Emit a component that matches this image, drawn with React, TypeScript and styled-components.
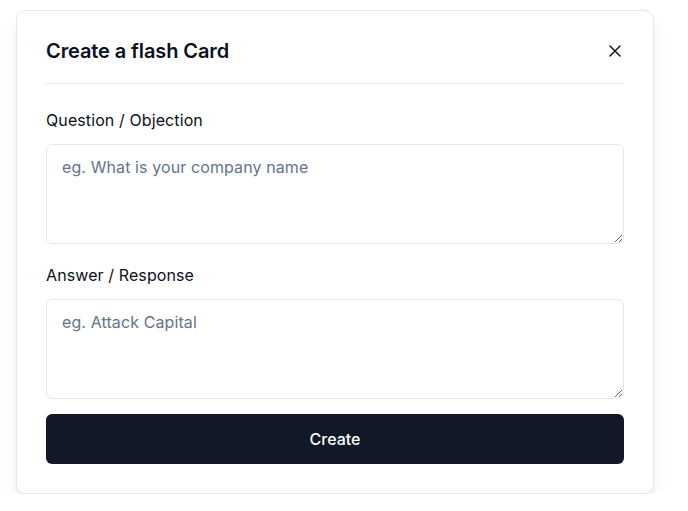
import { createGlobalStyle, styled } from 'styled-components';

const GlobalStyle = createGlobalStyle`
	* {
		box-sizing: border-box;
	}
	body {
		margin: 0;
		background: #ffffff;
		font-family: Inter, 'Noto Sans', sans-serif;
		color: #0f172a;
	}
`;

const Page = styled.div`
	padding: 10px 0 0 16px;
`;

const Card = styled.div`
	width: 638px;
	display: flex;
	flex-direction: column;
	padding: 26px 29px 29px;
	border: 1px solid #e2e8f0;
	border-radius: 10px;
	background: #ffffff;
	box-shadow: 0 10px 20px -4px rgba(0, 0, 0, 0.1), 0 4px 8px -4px rgba(0, 0, 0, 0.08);
`;

const Header = styled.div`
	display: flex;
	justify-content: space-between;
	align-items: center;
	padding-bottom: 18px;
	border-bottom: 1px solid #e2e8f0;
	h2 {
		margin: 0;
		font-size: 20px;
		line-height: 28px;
		font-weight: 600;
		letter-spacing: -0.1px;
		color: #0b1120;
	}
`;

const CloseButton = styled.button`
	display: flex;
	align-items: center;
	justify-content: center;
	width: 20px;
	height: 20px;
	margin-right: -1px;
	padding: 0;
	border: none;
	background: transparent;
	color: #0f172a;
	cursor: pointer;
`;

const Field = styled.label<{ $first?: boolean }>`
	display: flex;
	flex-direction: column;
	gap: 12px;
	margin-top: ${({ $first }) => ($first ? '24px' : '19px')};
	span {
		font-size: 16px;
		line-height: 24px;
		font-weight: 400;
		letter-spacing: 0.1px;
		color: #0b1120;
	}
`;

const TextArea = styled.textarea`
	height: 100px;
	width: 100%;
	padding: 12px 15px;
	border: 1px solid #e2e8f0;
	border-radius: 6px;
	font-family: Inter, 'Noto Sans', sans-serif;
	font-size: 16px;
	line-height: 20px;
	letter-spacing: 0.1px;
	color: #0f172a;
	resize: vertical;
	outline: none;
	&::placeholder {
		color: #64748b;
	}
`;

const SubmitButton = styled.button`
	margin-top: 15px;
	height: 50px;
	width: 100%;
	border: none;
	border-radius: 6px;
	background: #111827;
	color: #ffffff;
	font-family: Inter, 'Noto Sans', sans-serif;
	font-size: 16px;
	font-weight: 500;
	cursor: pointer;
`;

const App = () => {
	return (
		<Page>
			<GlobalStyle />
			<Card>
				<Header>
					<h2>Create a flash Card</h2>
					<CloseButton aria-label="Close">
						<svg width="12" height="12" viewBox="0 0 12 12" fill="none" stroke="currentColor" strokeWidth="1.5" strokeLinecap="round">
							<path d="M1 1 L11 11 M11 1 L1 11" />
						</svg>
					</CloseButton>
				</Header>
				<Field $first>
					<span>Question / Objection</span>
					<TextArea placeholder="eg. What is your company name" />
				</Field>
				<Field>
					<span>Answer / Response</span>
					<TextArea placeholder="eg. Attack Capital" />
				</Field>
				<SubmitButton>Create</SubmitButton>
			</Card>
		</Page>
	);
};

export default App;
